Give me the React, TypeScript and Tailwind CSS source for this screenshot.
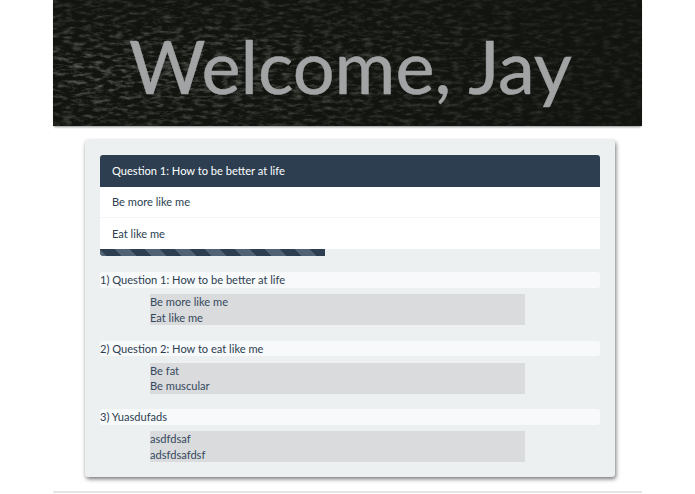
import React from "react";

const results = [
  { q: "1) Question 1: How to be better at life", a: ["Be more like me", "Eat like me"] },
  { q: "2) Question 2: How to eat like me", a: ["Be fat", "Be muscular"] },
  { q: "3) Yuasdufads", a: ["asdfdsaf", "adsfdsafdsf"] },
];

function Texture() {
  return (
    <svg className="absolute inset-0 w-full h-full" aria-hidden="true">
      <defs>
        <filter id="chalk" x="0" y="0" width="100%" height="100%">
          <feTurbulence type="fractalNoise" baseFrequency="0.1 0.26" numOctaves="4" seed="11" />
          <feColorMatrix
            type="matrix"
            values="0 0 0 0 0.5  0 0 0 0 0.52  0 0 0 0 0.44  1.5 0 0 0 -0.66"
          />
          <feGaussianBlur stdDeviation="0.5" />
        </filter>
        <radialGradient id="fade" cx="0.12" cy="0.6" r="0.9">
          <stop offset="0" stopColor="#fff" stopOpacity="0.75" />
          <stop offset="0.5" stopColor="#fff" stopOpacity="0.38" />
          <stop offset="1" stopColor="#fff" stopOpacity="0.18" />
        </radialGradient>
        <mask id="fadeMask">
          <rect width="100%" height="100%" fill="url(#fade)" />
        </mask>
      </defs>
      <g mask="url(#fadeMask)">
        <rect width="100%" height="100%" filter="url(#chalk)" />
      </g>
    </svg>
  );
}

export default function App() {
  return (
    <div className="w-[695px] h-[494px] overflow-hidden bg-white font-['Lato','Open_Sans',sans-serif] text-[11.1px] leading-[15.5px] text-[#2c3e50]">
      <div className="w-[589px] ml-[53px]">
        <div className="relative h-[126px] bg-[#121410] shadow-[0_2px_2px_-1px_rgba(0,0,0,0.45)] flex justify-center overflow-hidden">
          <Texture />
          <h1 className="relative mt-[21px] ml-[6px] text-[74px] leading-[90px] font-normal text-[#a2a3a4] [-webkit-text-stroke:0.5px_#a2a3a4] whitespace-nowrap">
            Welcome, Jay
          </h1>
        </div>

        <div className="mt-[14px] ml-[32px] w-[530px] h-[337px] bg-[#ecf0f1] rounded-[3px] shadow-[1px_2px_4px_rgba(0,0,0,0.55)] p-[15px]">
          <div className="h-[32px] bg-[#2c3e50] rounded-t-[3px] px-[12px] flex items-center text-white">
            Question 1: How to be better at life
          </div>
          <div className="h-[31px] bg-white px-[12px] flex items-center border-b border-[#f4f5f5]">Be more like me</div>
          <div className="h-[31px] bg-white px-[12px] flex items-center">Eat like me</div>
          <div className="h-[7px] w-[225px] rounded-bl-[3px] bg-[#516274] bg-[linear-gradient(45deg,#2c3e50_25%,transparent_25%,transparent_50%,#2c3e50_50%,#2c3e50_75%,transparent_75%)] bg-[length:30px_30px]" />
          <div className="mt-[16px] flex flex-col gap-[15.5px]">
            {results.map((r) => (
              <div key={r.q}>
                <div className="h-[15.5px] leading-[15px] bg-[#f8f9fa] rounded-[3px] whitespace-nowrap">{r.q}</div>
                <div className="mt-[6.5px] ml-[50px] w-[375px] h-[31px] bg-[#dadbdc] text-[#34495e]">
                  {r.a.map((t) => (
                    <div key={t}>{t}</div>
                  ))}
                </div>
              </div>
            ))}
          </div>
        </div>

        <div className="mt-[14px] h-[2px] bg-[#e4e5e6]" />
      </div>
    </div>
  );
}
